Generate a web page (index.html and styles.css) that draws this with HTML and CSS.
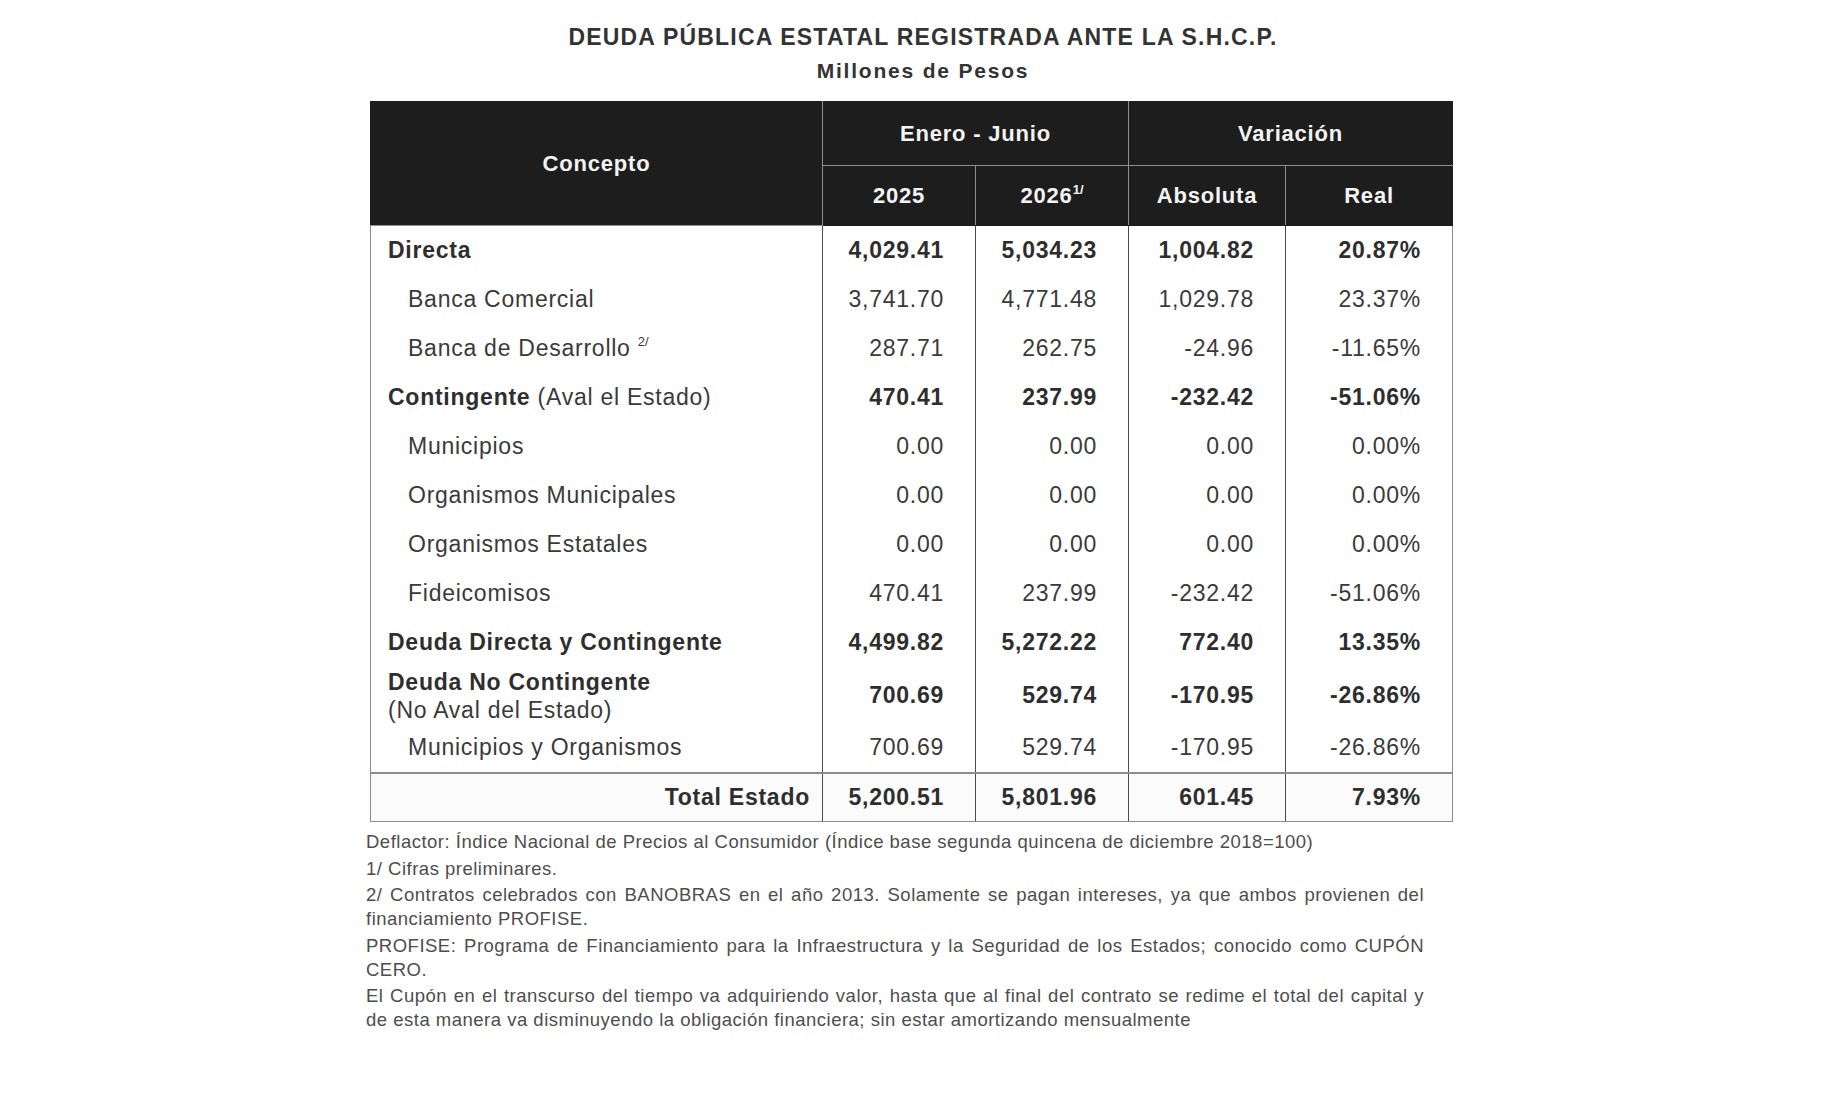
FILE: index.html
```html
<!DOCTYPE html>
<html lang="es">
<head>
<meta charset="utf-8">
<title>Deuda Pública Estatal</title>
<link rel="stylesheet" href="styles.css">
</head>
<body>
<div class="sheet">
  <header class="heading">
    <h1 class="title">DEUDA PÚBLICA ESTATAL REGISTRADA ANTE LA S.H.C.P.</h1>
    <p class="subtitle">Millones de Pesos</p>
  </header>

  <table class="debt">
    <colgroup>
      <col class="c-concept">
      <col class="c-num">
      <col class="c-num">
      <col class="c-abs">
      <col class="c-real">
    </colgroup>
    <thead>
      <tr class="h1">
        <th rowspan="2" class="concept-h">Concepto</th>
        <th colspan="2">Enero - Junio</th>
        <th colspan="2">Variación</th>
      </tr>
      <tr class="h2">
        <th>2025</th>
        <th>2026<sup class="hsup">1/</sup></th>
        <th>Absoluta</th>
        <th>Real</th>
      </tr>
    </thead>
    <tbody>
      <tr class="row strong">
        <td class="lbl">Directa</td><td>4,029.41</td><td>5,034.23</td><td>1,004.82</td><td>20.87%</td>
      </tr>
      <tr class="row">
        <td class="lbl sub">Banca Comercial</td><td>3,741.70</td><td>4,771.48</td><td>1,029.78</td><td>23.37%</td>
      </tr>
      <tr class="row">
        <td class="lbl sub">Banca de Desarrollo <sup class="note">2/</sup></td><td>287.71</td><td>262.75</td><td>-24.96</td><td>-11.65%</td>
      </tr>
      <tr class="row strong">
        <td class="lbl">Contingente <span class="plain">(Aval el Estado)</span></td><td>470.41</td><td>237.99</td><td>-232.42</td><td>-51.06%</td>
      </tr>
      <tr class="row">
        <td class="lbl sub">Municipios</td><td>0.00</td><td>0.00</td><td>0.00</td><td>0.00%</td>
      </tr>
      <tr class="row">
        <td class="lbl sub">Organismos Municipales</td><td>0.00</td><td>0.00</td><td>0.00</td><td>0.00%</td>
      </tr>
      <tr class="row">
        <td class="lbl sub">Organismos Estatales</td><td>0.00</td><td>0.00</td><td>0.00</td><td>0.00%</td>
      </tr>
      <tr class="row">
        <td class="lbl sub">Fideicomisos</td><td>470.41</td><td>237.99</td><td>-232.42</td><td>-51.06%</td>
      </tr>
      <tr class="row strong">
        <td class="lbl">Deuda Directa y Contingente</td><td>4,499.82</td><td>5,272.22</td><td>772.40</td><td>13.35%</td>
      </tr>
      <tr class="row tall strong">
        <td class="lbl">Deuda No Contingente<br><span class="plain">(No Aval del Estado)</span></td><td>700.69</td><td>529.74</td><td>-170.95</td><td>-26.86%</td>
      </tr>
      <tr class="row">
        <td class="lbl sub">Municipios y Organismos</td><td>700.69</td><td>529.74</td><td>-170.95</td><td>-26.86%</td>
      </tr>
    </tbody>
    <tfoot>
      <tr class="row total strong">
        <td class="lbl right">Total Estado</td><td>5,200.51</td><td>5,801.96</td><td>601.45</td><td>7.93%</td>
      </tr>
    </tfoot>
  </table>

  <div class="notes">
    <p>Deflactor: Índice Nacional de Precios al Consumidor (Índice base segunda quincena de diciembre 2018=100)</p>
    <p>1/ Cifras preliminares.</p>
    <p>2/ Contratos celebrados con BANOBRAS en el año 2013. Solamente se pagan intereses, ya que ambos provienen del financiamiento PROFISE.</p>
    <p>PROFISE: Programa de Financiamiento para la Infraestructura y la Seguridad de los Estados; conocido como CUPÓN CERO.</p>
    <p>El Cupón en el transcurso del tiempo va adquiriendo valor, hasta que al final del contrato se redime el total del capital y de esta manera va disminuyendo la obligación financiera; sin estar amortizando mensualmente</p>
  </div>
</div>
</body>
</html>
```

FILE: styles.css
```css
* { box-sizing: border-box; }

html, body {
  margin: 0;
  padding: 0;
  background: #ffffff;
}

body {
  font-family: "Liberation Sans", Arial, sans-serif;
  color: #3a3a3a;
}

.sheet {
  width: 1082px;
  margin-left: 370px;
  padding-top: 20px;
}

.heading {
  padding-left: 24px;
  text-align: center;
  color: #333333;
}

.title {
  margin: 0;
  font-size: 23px;
  line-height: 34px;
  font-weight: bold;
  letter-spacing: 1.2px;
}

.subtitle {
  margin: 0;
  font-size: 21px;
  line-height: 34px;
  font-weight: bold;
  letter-spacing: 1.8px;
}

.debt {
  margin-top: 13px;
  width: 1082px;
  table-layout: fixed;
  border-collapse: collapse;
  font-size: 23px;
  letter-spacing: 0.75px;
}

.c-concept { width: 452px; }
.c-num { width: 153px; }
.c-abs { width: 157px; }
.c-real { width: 167px; }

.debt thead th {
  background: #1d1d1d;
  color: #f4f4f4;
  font-weight: bold;
  font-size: 22px;
  letter-spacing: 0.8px;
  text-align: center;
  border: 1px solid #8e8e8e;
  border-top-color: #1d1d1d;
  padding: 0;
}

.debt thead tr.h1 th:first-child { border-left-color: #1d1d1d; }
.debt thead tr.h1 th:last-child,
.debt thead tr.h2 th:last-child { border-right-color: #1d1d1d; }
.debt thead tr.h2 th { border-bottom-color: #1d1d1d; }

.h1 { height: 64px; }
.h2 { height: 60px; }

.hsup {
  font-size: 13px;
  vertical-align: 9px;
  letter-spacing: 0;
}

.debt td {
  padding: 0 31px 0 0;
  text-align: right;
  vertical-align: middle;
  border-left: 1px solid #4a4a4a;
  border-right: 1px solid #4a4a4a;
  white-space: nowrap;
}

.debt td:first-child { border-left-color: #8a8a8a; }
.debt td:last-child { border-right-color: #8a8a8a; }

.row { height: 49px; }
.row.tall { height: 57px; }
.row.total { height: 49px; }

.debt td.lbl {
  text-align: left;
  padding: 0 0 0 17px;
}

.debt td.lbl.sub { padding-left: 37px; }

.debt td.lbl.right {
  text-align: right;
  padding: 0 12px 0 0;
}

.tall td.lbl {
  line-height: 28px;
  padding-top: 1px;
}

.strong td {
  font-weight: bold;
  color: #2e2e2e;
}

.plain {
  font-weight: normal;
  color: #3a3a3a;
}

.note {
  font-size: 13px;
  vertical-align: 10px;
  letter-spacing: 0;
}

.total td {
  border-top: 2px solid #8c8c8c;
  border-bottom: 1px solid #8c8c8c;
  background: #fbfbfb;
}

.notes {
  width: 1058px;
  margin-left: -4px;
  padding-top: 8px;
  font-size: 18.5px;
  line-height: 24px;
  color: #4d4d4d;
  text-align: justify;
  letter-spacing: 0.5px;
}

.notes p {
  margin: 0 0 2.5px 0;
}
```
